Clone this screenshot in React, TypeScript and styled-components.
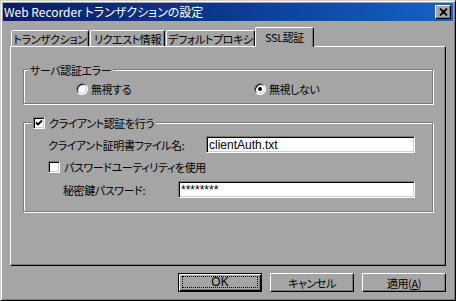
import React from 'react'
import styled, { createGlobalStyle } from 'styled-components'

const FACE = '#a5a5a5'
const SHADOW = '#7b7b7b'
const JP = `"Noto Sans CJK JP", "Noto Sans", sans-serif`

const GlobalStyle = createGlobalStyle`
  html, body {
    margin: 0;
    padding: 0;
    background: ${FACE};
  }
  * {
    box-sizing: border-box;
  }
`

const Window = styled.div`
  width: 456px;
  height: 301px;
  background: ${FACE};
  border: 1px solid;
  border-color: #d0d0d0 #000 #000 #d0d0d0;
  box-shadow: inset 1px 1px 0 #fff, inset -1px -1px 0 ${SHADOW};
  padding: 2px;
  display: flex;
  flex-direction: column;
  font-family: ${JP};
  font-size: 11px;
  letter-spacing: -0.4px;
  color: #000;
  font-feature-settings: 'palt';
`
const TitleBar = styled.div`
  height: 18px;
  flex: none;
  display: flex;
  align-items: center;
  justify-content: space-between;
  padding-left: 1px;
  background: linear-gradient(90deg, #0a1d66 0%, #0b3a92 50%, #1563c6 100%);
  color: #fff;
  font-size: 12px;
  letter-spacing: 0;
  line-height: 1;
`
const Title = styled.span`
  white-space: nowrap;
`
const CloseButton = styled.div`
  width: 16px;
  height: 14px;
  margin-right: 2px;
  background: ${FACE};
  border: 1px solid;
  border-color: #fff #000 #000 #fff;
  box-shadow: inset -1px -1px 0 ${SHADOW};
  display: flex;
  align-items: center;
  justify-content: center;
`
const Body = styled.div`
  flex: 1;
  display: flex;
  flex-direction: column;
  padding: 6px 7px 0 7px;
`
const TabStrip = styled.div`
  height: 19px;
  display: flex;
  align-items: flex-end;
  gap: 1px;
  padding-left: 1px;
`
const Tab = styled.div<{ $w: number; $active?: boolean }>`
  width: ${(p) => p.$w}px;
  height: ${(p) => (p.$active ? 20 : 16)}px;
  margin-bottom: ${(p) => (p.$active ? -1 : 0)}px;
  margin-left: ${(p) => (p.$active ? -1 : 0)}px;
  position: relative;
  z-index: ${(p) => (p.$active ? 1 : 0)};
  background: ${FACE};
  border: 1px solid;
  border-bottom: none;
  border-color: #fff #000 transparent #fff;
  border-radius: 2px 2px 0 0;
  box-shadow: inset -1px 0 0 ${SHADOW};
  display: flex;
  align-items: ${(p) => (p.$active ? 'flex-start' : 'center')};
  padding-top: ${(p) => (p.$active ? 2 : 0)}px;
  justify-content: center;
  line-height: 14px;
  white-space: nowrap;
`
const Panel = styled.div`
  height: 220px;
  flex: none;
  border: 1px solid;
  border-color: #fff #000 #000 #fff;
  box-shadow: inset -1px -1px 0 ${SHADOW};
  padding: 22px 12px 0 12px;
  display: flex;
  flex-direction: column;
`
const GroupBox = styled.div<{ $gap: number; $pb: number; $mt?: number }>`
  display: flex;
  flex-direction: column;
  gap: ${(p) => p.$gap}px;
  padding-bottom: ${(p) => p.$pb}px;
  margin-top: ${(p) => p.$mt ?? 0}px;
  border: 1px solid ${SHADOW};
  box-shadow: 1px 1px 0 #fff, inset 1px 1px 0 #fff;
`
const Legend = styled.div<{ $indent: number }>`
  align-self: flex-start;
  margin: -7px 0 -1px ${(p) => p.$indent}px;
  padding: 0 2px;
  height: 14px;
  background: ${FACE};
  display: flex;
  align-items: center;
  gap: 4px;
  line-height: 14px;
  white-space: nowrap;
`
const RadioRow = styled.div`
  display: flex;
  padding-left: 52px;
  height: 14px;
`
const RadioOption = styled.label`
  width: 179px;
  display: flex;
  align-items: center;
  gap: 3px;
  line-height: 14px;
`
const RadioDot = styled.span<{ $on?: boolean }>`
  width: 12px;
  height: 12px;
  flex: none;
  border-radius: 50%;
  background: #fff;
  border: 1px solid;
  border-color: ${SHADOW} #fff #fff ${SHADOW};
  box-shadow: inset 1px 1px 0 #000, inset -1px -1px 0 #d0d0d0;
  display: flex;
  align-items: center;
  justify-content: center;
  &::after {
    content: '';
    width: 4px;
    height: 4px;
    border-radius: 50%;
    background: ${(p) => (p.$on ? '#000' : 'transparent')};
  }
`
const Box = styled.span`
  width: 12px;
  height: 12px;
  flex: none;
  background: #fff;
  border: 1px solid;
  border-color: ${SHADOW} #fff #fff ${SHADOW};
  box-shadow: inset 1px 1px 0 #000, inset -1px -1px 0 #d0d0d0;
  display: flex;
  align-items: center;
  justify-content: center;
`
const FieldRow = styled.div<{ $indent: number }>`
  display: flex;
  align-items: center;
  justify-content: space-between;
  padding-left: ${(p) => p.$indent}px;
  padding-right: 17px;
  min-height: 14px;
  line-height: 14px;
  white-space: nowrap;
`
const CheckRow = styled.label<{ $indent: number }>`
  display: flex;
  align-items: center;
  gap: 4px;
  padding-left: ${(p) => p.$indent}px;
  height: 14px;
  line-height: 14px;
`
const TextBox = styled.input<{ $w: number }>`
  width: ${(p) => p.$w}px;
  height: 17px;
  margin: 0;
  border: 1px solid;
  border-color: ${SHADOW} #fff #fff ${SHADOW};
  box-shadow: inset 1px 1px 0 #000, inset -1px -1px 0 #d0d0d0;
  background: #fff;
  padding: 0 2px;
  font-family: 'Liberation Sans', Arial, sans-serif;
  font-size: 12px;
  letter-spacing: 0;
  color: #000;
  outline: none;
`
const ButtonRow = styled.div`
  display: flex;
  justify-content: flex-end;
  gap: 8px;
  margin-top: 7px;
`
const Button = styled.div<{ $default?: boolean }>`
  width: 84px;
  height: 19px;
  background: ${FACE};
  border: 1px solid;
  border-color: ${(p) => (p.$default ? '#000' : '#fff #000 #000 #fff')};
  box-shadow: ${(p) =>
    p.$default
      ? `inset 1px 1px 0 #fff, inset -1px -1px 0 #000, inset -2px -2px 0 ${SHADOW}`
      : `inset -1px -1px 0 ${SHADOW}`};
  display: flex;
  align-items: center;
  justify-content: center;
  padding: ${(p) => (p.$default ? '2px 3px 3px 3px' : '0')};
  line-height: 14px;
`
const FocusRect = styled.span`
  flex: 1;
  align-self: stretch;
  border: 1px dotted #000;
  display: flex;
  align-items: center;
  justify-content: center;
  font-family: 'Liberation Sans', Arial, sans-serif;
  font-size: 12px;
  letter-spacing: 0;
`
const Mnemonic = styled.span`
  text-decoration: underline;
`

const Check = () => (
  <svg width="8" height="8" viewBox="0 0 8 8">
    <path d="M1 3.5 L3 5.5 L7 1.5" stroke="#000" strokeWidth="1.8" fill="none" />
  </svg>
)

const CloseX = () => (
  <svg width="9" height="8" viewBox="0 0 9 8">
    <path d="M1 0.5 L8 7.5 M8 0.5 L1 7.5" stroke="#000" strokeWidth="1.8" />
  </svg>
)

export default function App() {
  return (
    <>
      <GlobalStyle />
      <Window>
        <TitleBar>
          <Title>Web Recorder トランザクションの設定</Title>
          <CloseButton>
            <CloseX />
          </CloseButton>
        </TitleBar>
        <Body>
          <TabStrip>
            <Tab $w={78}>トランザクション</Tab>
            <Tab $w={75}>リクエスト情報</Tab>
            <Tab $w={89}>デフォルトプロキシ</Tab>
            <Tab $w={59} $active>
              SSL認証
            </Tab>
          </TabStrip>
          <Panel>
            <GroupBox $gap={6} $pb={7}>
              <Legend $indent={4}>サーバ認証エラー</Legend>
              <RadioRow>
                <RadioOption>
                  <RadioDot />
                  無視する
                </RadioOption>
                <RadioOption>
                  <RadioDot $on />
                  無視しない
                </RadioOption>
              </RadioRow>
            </GroupBox>
            <GroupBox $gap={7} $pb={13} $mt={18}>
              <Legend $indent={7}>
                <Box>
                  <Check />
                </Box>
                クライアント認証を行う
              </Legend>
              <FieldRow $indent={24}>
                クライアント証明書ファイル名:
                <TextBox $w={209} readOnly value="clientAuth.txt" />
              </FieldRow>
              <CheckRow $indent={24}>
                <Box />
                パスワードユーティリティを使用
              </CheckRow>
              <FieldRow $indent={39}>
                秘密鍵パスワード:
                <TextBox $w={237} readOnly value="********" />
              </FieldRow>
            </GroupBox>
          </Panel>
          <ButtonRow>
            <Button $default>
              <FocusRect>OK</FocusRect>
            </Button>
            <Button>キャンセル</Button>
            <Button>
              適用(<Mnemonic>A</Mnemonic>)
            </Button>
          </ButtonRow>
        </Body>
      </Window>
    </>
  )
}
